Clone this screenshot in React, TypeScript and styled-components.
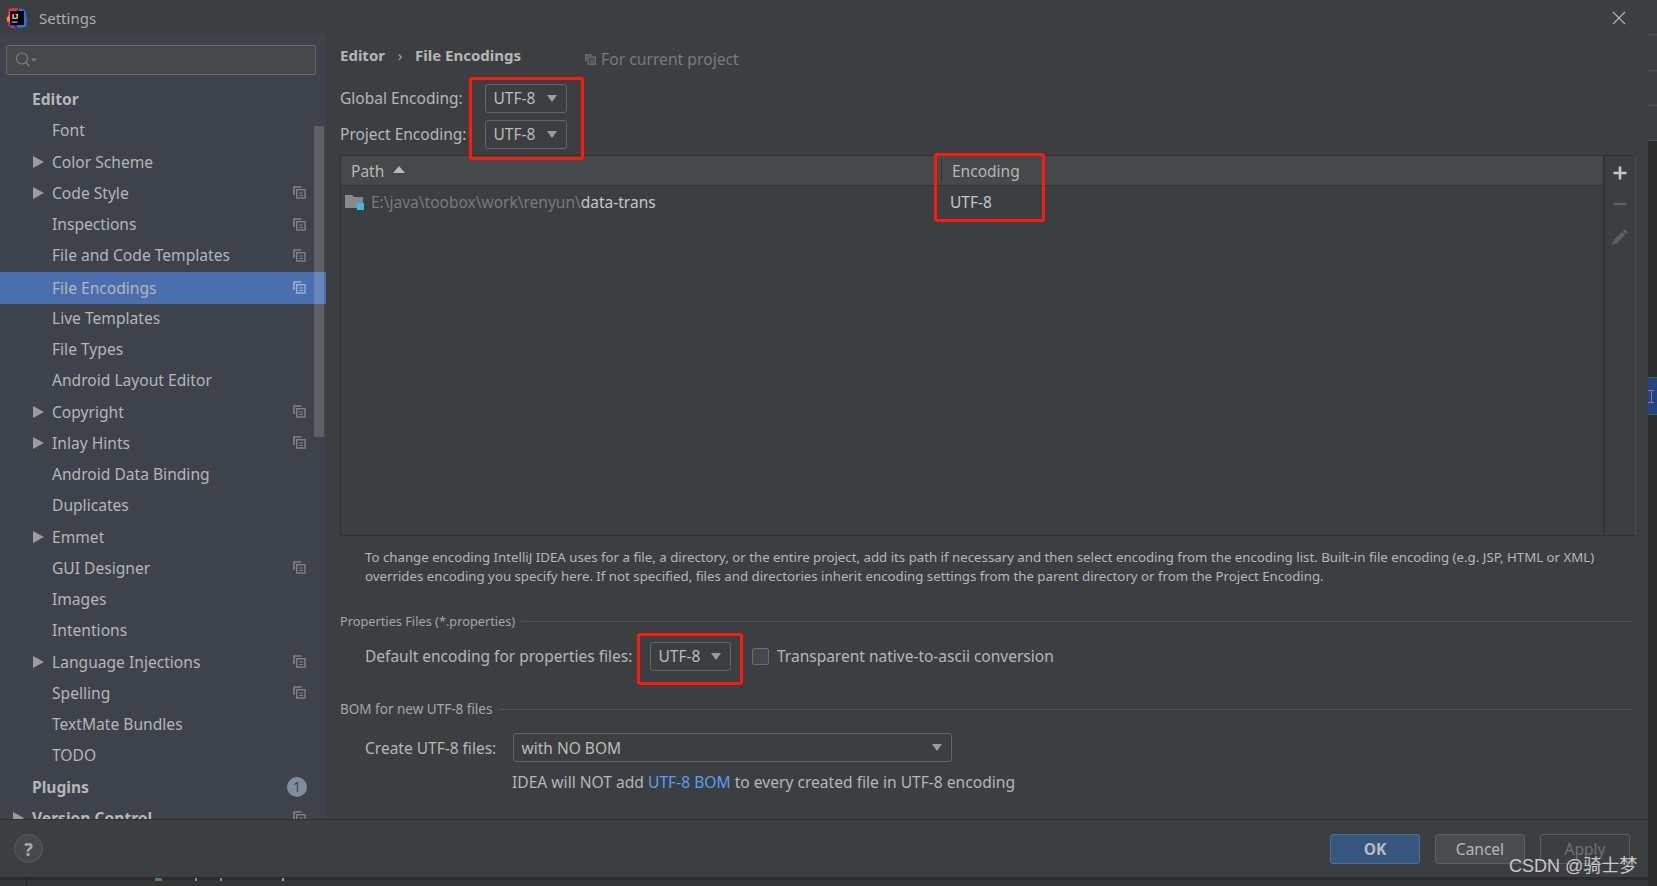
import React from 'react';
import styled, { createGlobalStyle } from 'styled-components';

const GlobalStyle = createGlobalStyle`
  html, body {
    margin: 0;
    padding: 0;
    background: #2b2b2b;
    overflow: hidden;
  }
  * {
    box-sizing: border-box;
  }
`;

type NavItem = {
  label: string;
  level: 0 | 1;
  arrow?: boolean;
  copy?: boolean;
  badge?: string;
  selected?: boolean;
};

const navItems: NavItem[] = [
  { label: 'Editor', level: 0 },
  { label: 'Font', level: 1 },
  { label: 'Color Scheme', level: 1, arrow: true },
  { label: 'Code Style', level: 1, arrow: true, copy: true },
  { label: 'Inspections', level: 1, copy: true },
  { label: 'File and Code Templates', level: 1, copy: true },
  { label: 'File Encodings', level: 1, copy: true, selected: true },
  { label: 'Live Templates', level: 1 },
  { label: 'File Types', level: 1 },
  { label: 'Android Layout Editor', level: 1 },
  { label: 'Copyright', level: 1, arrow: true, copy: true },
  { label: 'Inlay Hints', level: 1, arrow: true, copy: true },
  { label: 'Android Data Binding', level: 1 },
  { label: 'Duplicates', level: 1 },
  { label: 'Emmet', level: 1, arrow: true },
  { label: 'GUI Designer', level: 1, copy: true },
  { label: 'Images', level: 1 },
  { label: 'Intentions', level: 1 },
  { label: 'Language Injections', level: 1, arrow: true, copy: true },
  { label: 'Spelling', level: 1, copy: true },
  { label: 'TextMate Bundles', level: 1 },
  { label: 'TODO', level: 1 },
  { label: 'Plugins', level: 0, badge: '1' },
  { label: 'Version Control', level: 0, arrow: true, copy: true },
];

// bits of the editor window showing under the dialog
const specks = [
  { x: 155, w: 7, color: '#4f8a2e' },
  { x: 195, w: 2, color: '#8a8d90' },
  { x: 220, w: 2, color: '#8a8d90' },
  { x: 282, w: 2, color: '#8a9db0' },
];

function CopyIcon({ color = '#7f8285', size = 13 }: { color?: string; size?: number }) {
  return (
    <svg width={size} height={size} viewBox="0 0 13 13" fill="none">
      <path d="M8.5 1H1v8" stroke={color} strokeWidth="1.6" />
      <rect x="3.7" y="3.7" width="8.3" height="8.3" fill="none" stroke={color} strokeWidth="1.4" />
      <path d="M6 7h4M6 9.5h4" stroke={color} strokeWidth="1.2" />
    </svg>
  );
}

function Logo() {
  return (
    <svg width="22" height="22" viewBox="0 0 22 22">
      <path d="M3 1.5 12 1l-3 9-8 3z" fill="#fe2857" />
      <path d="M0.5 11 5 7v9l-3.5-1z" fill="#fd8c1e" />
      <path d="M13 1l6 2 2 9-1 8-9 1z" fill="#2f6fe0" />
      <path d="M2 14l8 7H5l-3-3z" fill="#a52fb0" />
      <rect x="4" y="4" width="14" height="14" fill="#000" />
      <text x="6" y="11.5" fontSize="7.5" fontWeight="700" fill="#fff" fontFamily="'Liberation Sans', sans-serif">IJ</text>
      <rect x="5.5" y="14.5" width="6" height="1.2" fill="#bbb" />
    </svg>
  );
}

function Combo({ value, width }: { value: string; width: number }) {
  return (
    <ComboBox $width={width}>
      <span>{value}</span>
      <ComboArrow />
    </ComboBox>
  );
}

export default function App() {
  return (
    <>
      <GlobalStyle />
      <Screen>
        <LeftColumn>
          <Dialog>
            <TitleBar>
              <LogoSlot>
                <Logo />
              </LogoSlot>
              <TitleText>Settings</TitleText>
              <CloseIcon width="14" height="14" viewBox="0 0 14 14">
                <path d="M1 1l12 12M13 1L1 13" stroke="#b4b6b8" strokeWidth="1.1" fill="none" />
              </CloseIcon>
            </TitleBar>
            <Body>
              <Sidebar>
                <SearchBox>
                  <svg width="24" height="16" viewBox="0 0 24 16" fill="none">
                    <circle cx="7" cy="6.5" r="5.5" stroke="#7d8082" strokeWidth="1.2" />
                    <path d="M11 10.5l3.5 4" stroke="#7d8082" strokeWidth="1.4" />
                    <path d="M16 6.5h6l-3 3z" fill="#7d8082" />
                  </svg>
                </SearchBox>
                <NavList>
                  {navItems.map((item) => (
                    <NavRow key={item.label} $selected={item.selected} $level={item.level}>
                      {item.arrow && <NavArrow $level={item.level} />}
                      <NavLabel $bold={item.level === 0}>{item.label}</NavLabel>
                      {item.copy && (
                        <NavTrail>
                          <CopyIcon color={item.selected ? '#9fb0cc' : '#7f8285'} />
                        </NavTrail>
                      )}
                      {item.badge && <Badge>{item.badge}</Badge>}
                    </NavRow>
                  ))}
                </NavList>
                <ScrollThumb />
              </Sidebar>
              <Main>
                <Breadcrumb>
                  <Crumb>Editor</Crumb>
                  <CrumbSep>›</CrumbSep>
                  <Crumb>File Encodings</Crumb>
                  <ProjectHint>
                    <CopyIcon color="#787a7c" size={11} />
                    For current project
                  </ProjectHint>
                </Breadcrumb>
                <EncodingRow $top={18}>
                  <FieldLabel $width={145}>Global Encoding:</FieldLabel>
                  <Combo value="UTF-8" width={82} />
                </EncodingRow>
                <EncodingRow $top={6}>
                  <FieldLabel $width={145}>Project Encoding:</FieldLabel>
                  <Combo value="UTF-8" width={82} />
                </EncodingRow>
                <TableFrame>
                  <TableArea>
                    <TableHead>
                      <PathHead>
                        Path
                        <SortArrow />
                      </PathHead>
                      <EncodingHead>Encoding</EncodingHead>
                    </TableHead>
                    <TableRow>
                      <PathCell>
                        <svg width="20" height="18" viewBox="0 0 20 18">
                          <path d="M0 2h7l2 2h9v11H0z" fill="#87898c" />
                          <rect x="12" y="10" width="7" height="7" fill="#40b6e0" />
                        </svg>
                        <PathDim>E:\java\toobox\work\renyun\</PathDim>
                        <PathBright>data-trans</PathBright>
                      </PathCell>
                      <EncodingCell>UTF-8</EncodingCell>
                    </TableRow>
                  </TableArea>
                  <TableTools>
                    <svg width="14" height="14" viewBox="0 0 14 14">
                      <path d="M7 .5v13M.5 7h13" stroke="#c4c6c8" strokeWidth="2.6" />
                    </svg>
                    <svg width="14" height="14" viewBox="0 0 14 14">
                      <path d="M.5 7h13" stroke="#5d5f61" strokeWidth="2.2" />
                    </svg>
                    <svg width="18" height="18" viewBox="0 0 18 18">
                      <path d="M13.5 1.2l3.2 3-1.6 1.7-3.2-3z" fill="#5d5f61" />
                      <path d="M11 3.8l3.2 3L6 15.2l-4.6 1.6c-.3 0-.4-.2-.3-.5L2.6 12z" fill="#5d5f61" />
                    </svg>
                  </TableTools>
                </TableFrame>
                <Description>
                  To change encoding IntelliJ IDEA uses for a file, a directory, or the entire project, add its path if necessary and then select encoding from the encoding list. Built-in file encoding (e.g. JSP, HTML or XML)
                  <br />
                  overrides encoding you specify here. If not specified, files and directories inherit encoding settings from the parent directory or from the Project Encoding.
                </Description>
                <GroupTitle $top={26.5} $size={12.75}>
                  <span>Properties Files (*.properties)</span>
                  <GroupLine />
                </GroupTitle>
                <PropertiesRow>
                  <FieldLabel $width={285}>Default encoding for properties files:</FieldLabel>
                  <Combo value="UTF-8" width={81} />
                  <CheckBox />
                  <CheckLabel>Transparent native-to-ascii conversion</CheckLabel>
                </PropertiesRow>
                <GroupTitle $top={29} $size={13.5}>
                  <span>BOM for new UTF-8 files</span>
                  <GroupLine />
                </GroupTitle>
                <CreateRow>
                  <FieldLabel $width={148}>Create UTF-8 files:</FieldLabel>
                  <Combo value="with NO BOM" width={439} />
                </CreateRow>
                <BomHint>
                  IDEA will NOT add <BomLink>UTF-8 BOM</BomLink> to every created file in UTF-8 encoding
                </BomHint>
              </Main>
            </Body>
            <Footer>
              <HelpButton>?</HelpButton>
              <FooterButtons>
                <PrimaryButton>OK</PrimaryButton>
                <FooterButton>Cancel</FooterButton>
                <FooterButton $disabled>Apply</FooterButton>
              </FooterButtons>
            </Footer>
          </Dialog>
          <BottomStrip>
            {specks.map((s) => (
              <Speck key={s.x} $x={s.x} $w={s.w} $color={s.color} />
            ))}
          </BottomStrip>
        </LeftColumn>
        <RightStrip>
          <StripCell />
          <StripCell />
          <StripCell />
          <StripCell />
          <StripDark>
            <BlueMark>
              <IBeam />
            </BlueMark>
          </StripDark>
        </RightStrip>

        <RedBox $x={469} $y={77} $w={115} $h={83} />
        <RedBox $x={934} $y={153} $w={111} $h={69} />
        <RedBox $x={637} $y={633} $w={106} $h={52} />
        <Watermark>CSDN @骑士梦</Watermark>
      </Screen>
    </>
  );
}

const uiFont = `"Noto Sans", "Open Sans", sans-serif`;

const Screen = styled.div`
  position: relative;
  width: 1657px;
  height: 886px;
  display: flex;
  align-items: flex-start;
  background: #2b2b2b;
  font-family: ${uiFont};
  color: #bbbbbb;
  overflow: hidden;
`;

const LeftColumn = styled.div`
  width: 1648px;
  height: 886px;
  flex: none;
  display: flex;
  flex-direction: column;
`;

const Dialog = styled.div`
  height: 877px;
  flex: none;
  display: flex;
  flex-direction: column;
  background: #3c3f41;
`;

const BottomStrip = styled.div`
  position: relative;
  flex: 1;
  background: #333537;
  border-top: 3px solid #2b2c2d;
  &::before {
    content: '';
    position: absolute;
    left: 26px;
    top: -3px;
    bottom: 0;
    width: 1px;
    background: #232425;
  }
`;

const Speck = styled.span<{ $x: number; $w: number; $color: string }>`
  position: absolute;
  left: ${(p) => p.$x}px;
  top: -2px;
  width: ${(p) => p.$w}px;
  height: 3px;
  background: ${(p) => p.$color};
`;

const TitleBar = styled.div`
  height: 35px;
  flex: none;
  display: flex;
  align-items: center;
  padding: 0 22px 0 6px;
  background: #3c3f41;
`;

const LogoSlot = styled.div`
  width: 22px;
  height: 22px;
  margin-right: 11px;
`;

const TitleText = styled.div`
  font-size: 15px;
  color: #a9adb0;
`;

const CloseIcon = styled.svg`
  margin-left: auto;
`;

const Body = styled.div`
  flex: 1;
  min-height: 0;
  display: flex;
`;

const Sidebar = styled.div`
  position: relative;
  width: 326px;
  flex: none;
  background: #3e424b;
  overflow: hidden;
`;

const SearchBox = styled.div`
  height: 30px;
  margin: 10px 10px 0 6px;
  padding: 0 0 0 8px;
  display: flex;
  align-items: center;
  background: #45494a;
  border: 1px solid #646464;
  border-radius: 2px;
`;

const NavList = styled.div`
  margin-top: 8.5px;
`;

const NavRow = styled.div<{ $selected?: boolean; $level: number }>`
  position: relative;
  height: ${(p) => (p.$selected ? 32 : 31.25)}px;
  margin: ${(p) => (p.$selected ? '1px 0 -1.75px' : '0')};
  padding-bottom: ${(p) => (p.$selected ? 1 : 0)}px;
  display: flex;
  align-items: center;
  padding-left: ${(p) => (p.$level === 0 ? 32 : 52)}px;
  background: ${(p) => (p.$selected ? '#4b6eaf' : 'transparent')};
`;

const NavArrow = styled.span<{ $level: number }>`
  position: absolute;
  left: ${(p) => (p.$level === 0 ? 13 : 33)}px;
  width: 0;
  height: 0;
  border-style: solid;
  border-width: 6px 0 6px 11px;
  border-color: transparent transparent transparent #9a9c9e;
`;

const NavLabel = styled.span<{ $bold?: boolean }>`
  font-size: 15.6px;
  font-weight: ${(p) => (p.$bold ? 700 : 400)};
  color: #b4b6b8;
`;

const NavTrail = styled.span`
  position: absolute;
  left: 293px;
  display: flex;
`;

const Badge = styled.span`
  position: absolute;
  left: 287px;
  width: 20px;
  height: 20px;
  border-radius: 50%;
  background: #7f8e9c;
  color: #3e424b;
  font-size: 14px;
  display: flex;
  align-items: center;
  justify-content: center;
`;

const ScrollThumb = styled.div`
  position: absolute;
  left: 314px;
  top: 91px;
  width: 10px;
  height: 311px;
  background: rgba(255, 255, 255, 0.16);
`;

const Main = styled.div`
  flex: 1;
  min-width: 0;
  padding: 10px 16px 0 14px;
`;

const Breadcrumb = styled.div`
  height: 20px;
  display: flex;
  align-items: center;
`;

const Crumb = styled.span`
  font-size: 15px;
  font-weight: 700;
  color: #b4b6b8;
`;

const CrumbSep = styled.span`
  width: 30px;
  text-align: center;
  font-size: 15px;
  color: #a0a2a4;
`;

const ProjectHint = styled.span`
  position: relative;
  top: 4px;
  margin-left: 64px;
  display: flex;
  align-items: center;
  gap: 5px;
  font-size: 15.7px;
  color: #787a7c;
`;

const EncodingRow = styled.div<{ $top: number }>`
  height: 30px;
  margin-top: ${(p) => p.$top}px;
  display: flex;
  align-items: center;
`;

const FieldLabel = styled.span<{ $width: number }>`
  width: ${(p) => p.$width}px;
  flex: none;
  font-size: 15.5px;
  color: #b4b6b8;
  white-space: nowrap;
`;

const ComboBox = styled.div<{ $width: number }>`
  width: ${(p) => p.$width}px;
  height: 29px;
  flex: none;
  padding: 0 9px 0 7.5px;
  display: flex;
  align-items: center;
  justify-content: space-between;
  background: #3c3f41;
  border: 1px solid #646464;
  border-radius: 3px;
  font-size: 15.5px;
  color: #bbbbbb;
`;

const ComboArrow = styled.span`
  width: 0;
  height: 0;
  border-style: solid;
  border-width: 7px 5.5px 0 5.5px;
  border-color: #9a9c9e transparent transparent transparent;
`;

const TableFrame = styled.div`
  height: 381px;
  margin: 6px -4px 0 0;
  display: flex;
  border: 1px solid #323232;
  border-right-color: #4a4c4e;
`;

const TableArea = styled.div`
  flex: 1;
  min-width: 0;
`;

const TableHead = styled.div`
  height: 30px;
  display: flex;
  background: #45494a;
  border-bottom: 1px solid #323232;
  font-size: 15.5px;
  color: #b4b6b8;
`;

const PathHead = styled.div`
  width: 600px;
  padding: 1px 0 0 10px;
  display: flex;
  align-items: center;
  gap: 9px;
`;

const SortArrow = styled.span`
  width: 0;
  height: 0;
  margin-top: -3px;
  border-style: solid;
  border-width: 0 6px 7px 6px;
  border-color: transparent transparent #b4b6b8 transparent;
`;

const EncodingHead = styled.div`
  flex: 1;
  margin: 3px 0;
  padding: 1px 0 0 10px;
  display: flex;
  align-items: center;
  border-left: 1px solid #323232;
`;

const TableRow = styled.div`
  height: 32px;
  display: flex;
  align-items: center;
  font-size: 15.5px;
`;

const PathCell = styled.div`
  width: 600px;
  padding-left: 4px;
  display: flex;
  align-items: center;
  gap: 6px;
`;

const PathDim = styled.span`
  color: #787a7c;
  margin-right: -6px;
`;

const PathBright = styled.span`
  color: #c4c6c8;
`;

const EncodingCell = styled.div`
  padding-left: 9px;
  color: #c4c6c8;
`;

const TableTools = styled.div`
  width: 32px;
  flex: none;
  padding-top: 10px;
  display: flex;
  flex-direction: column;
  align-items: center;
  gap: 17px;
  border-left: 2px solid #323232;
`;

const Description = styled.div`
  margin: 11.5px 0 0 25px;
  font-size: 13.25px;
  line-height: 19px;
  color: #b4b6b8;
  white-space: nowrap;
`;

const GroupTitle = styled.div<{ $top: number; $size: number }>`
  height: 18px;
  margin-top: ${(p) => p.$top}px;
  display: flex;
  align-items: center;
  gap: 6px;
  font-size: ${(p) => p.$size}px;
  color: #a4a6a8;
`;

const GroupLine = styled.span`
  flex: 1;
  height: 1px;
  background: #515151;
`;

const PropertiesRow = styled.div`
  height: 30px;
  margin: 11px 0 0 25px;
  display: flex;
  align-items: center;
`;

const CheckBox = styled.span`
  width: 17px;
  height: 17px;
  margin-left: 21px;
  flex: none;
  background: #43494a;
  border: 1px solid #6b6b6b;
  border-radius: 2px;
`;

const CheckLabel = styled.span`
  margin-left: 8px;
  font-size: 15.5px;
  color: #b4b6b8;
`;

const CreateRow = styled.div`
  height: 31px;
  margin: 14px 0 0 25px;
  display: flex;
  align-items: center;
`;

const BomHint = styled.div`
  margin: 10px 0 0 172px;
  font-size: 15.6px;
  line-height: 19px;
  color: #b4b6b8;
`;

const BomLink = styled.span`
  color: #589df6;
`;

const Footer = styled.div`
  height: 58px;
  flex: none;
  padding: 14px 18px 0 14px;
  display: flex;
  align-items: flex-start;
  justify-content: space-between;
  background: #3c3f41;
  border-top: 1px solid #323232;
`;

const HelpButton = styled.div`
  width: 29px;
  height: 29px;
  border-radius: 50%;
  display: flex;
  align-items: center;
  justify-content: center;
  background: #46494b;
  border: 1px solid #5a5d5f;
  font-size: 18px;
  font-weight: 700;
  color: #a8aaac;
`;

const FooterButtons = styled.div`
  display: flex;
  gap: 15px;
`;

const FooterButton = styled.div<{ $disabled?: boolean }>`
  width: 90px;
  height: 30px;
  display: flex;
  align-items: center;
  justify-content: center;
  background: ${(p) => (p.$disabled ? 'transparent' : '#4a4d4f')};
  border: 1px solid ${(p) => (p.$disabled ? '#5a5c5e' : '#5e6060')};
  border-radius: 3px;
  font-size: 15.5px;
  color: ${(p) => (p.$disabled ? '#6f7173' : '#b4b6b8')};
`;

const PrimaryButton = styled(FooterButton)`
  background: #365880;
  border-color: #4c708c;
  font-weight: 700;
  color: #bbbbbb;
`;

const RightStrip = styled.div`
  width: 9px;
  height: 886px;
  flex: none;
  display: flex;
  flex-direction: column;
`;

const StripCell = styled.div`
  height: 35.25px;
  flex: none;
  background: #3c3f41;
  border-bottom: 1px solid #4c4f51;
`;

const StripDark = styled.div`
  flex: 1;
  padding-top: 236px;
  background: #2b2b2b;
`;

const BlueMark = styled.div`
  height: 38px;
  display: flex;
  align-items: center;
  background: #214283;
  border-top: 1px solid #2d6b3a;
  border-bottom: 1px solid #2d6b3a;
`;

const IBeam = styled.span`
  width: 6px;
  height: 13px;
  border-top: 1px solid #9a6f9c;
  border-bottom: 1px solid #9a6f9c;
  background: linear-gradient(#9a6f9c, #9a6f9c) center / 1px 100% no-repeat;
`;

const RedBox = styled.div<{ $x: number; $y: number; $w: number; $h: number }>`
  position: absolute;
  left: ${(p) => p.$x}px;
  top: ${(p) => p.$y}px;
  width: ${(p) => p.$w}px;
  height: ${(p) => p.$h}px;
  border: 3px solid #fa1a0e;
  border-radius: 3px;
  pointer-events: none;
`;

const Watermark = styled.div`
  position: absolute;
  left: 1509px;
  top: 853px;
  font-family: "Liberation Sans", "Noto Sans CJK SC", sans-serif;
  font-size: 18px;
  line-height: 26px;
  color: #c8c8c8;
  white-space: nowrap;
`;
